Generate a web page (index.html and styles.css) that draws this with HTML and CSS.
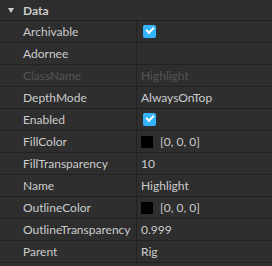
FILE: index.html
```html
<!DOCTYPE html>
<html>
<head>
	<meta charset="UTF-8">
	<title>Properties</title>
	<link rel="stylesheet" href="styles.css">
</head>
<body>
	<section class="props">
		<div class="group">
			<span class="arrow"></span>
			<span class="groupName">Data</span>
		</div>
		<ul class="list">
			<li class="row"><span class="key">Archivable</span><span class="val"><i class="check"></i></span></li>
			<li class="row"><span class="key">Adornee</span><span class="val"></span></li>
			<li class="row off"><span class="key">ClassName</span><span class="val">Highlight</span></li>
			<li class="row"><span class="key">DepthMode</span><span class="val">AlwaysOnTop</span></li>
			<li class="row"><span class="key">Enabled</span><span class="val"><i class="check"></i></span></li>
			<li class="row"><span class="key">FillColor</span><span class="val"><i class="swatch"></i>[0, 0, 0]</span></li>
			<li class="row"><span class="key">FillTransparency</span><span class="val">10</span></li>
			<li class="row"><span class="key">Name</span><span class="val">Highlight</span></li>
			<li class="row"><span class="key">OutlineColor</span><span class="val"><i class="swatch"></i>[0, 0, 0]</span></li>
			<li class="row"><span class="key">OutlineTransparency</span><span class="val">0.999</span></li>
			<li class="row"><span class="key">Parent</span><span class="val">Rig</span></li>
		</ul>
	</section>
</body>
</html>
```

FILE: styles.css
```css
body,
ul {
	margin: 0;
	padding: 0;
}

ul {
	list-style: none;
}

body {
	background-color: #2e2e2e;
	font-family: Lato, "Noto Sans", sans-serif;
	font-size: 12px;
	color: #cccccc;
}

.group {
	display: flex;
	align-items: center;
	height: 20px;
	border-bottom: 1px solid #222;
}

.arrow {
	width: 0;
	height: 0;
	margin: 0 9px 0 8px;
	border-left: 3px solid transparent;
	border-right: 3px solid transparent;
	border-top: 5px solid #ccc;
}

.groupName {
	font-weight: bold;
}

.row {
	display: grid;
	grid-template-columns: 137px 1fr;
	height: 21px;
	border-bottom: 1px solid #222;
}

.key {
	display: flex;
	align-items: center;
	padding-left: 23px;
	border-right: 1px solid #222;
}

.val {
	display: flex;
	align-items: center;
	padding-left: 4px;
}

.off {
	color: #555;
}

.check {
	position: relative;
	width: 13px;
	height: 13px;
	margin-left: 2px;
	border-radius: 2px;
	background-color: #35b5ff;
}

.check:after {
	content: "";
	position: absolute;
	left: 3px;
	top: 2px;
	width: 6px;
	height: 3px;
	border-left: 2px solid #fff;
	border-bottom: 2px solid #fff;
	transform: rotate(-45deg);
}

.swatch {
	width: 12px;
	height: 12px;
	margin-right: 7px;
	background-color: #000;
}
```
